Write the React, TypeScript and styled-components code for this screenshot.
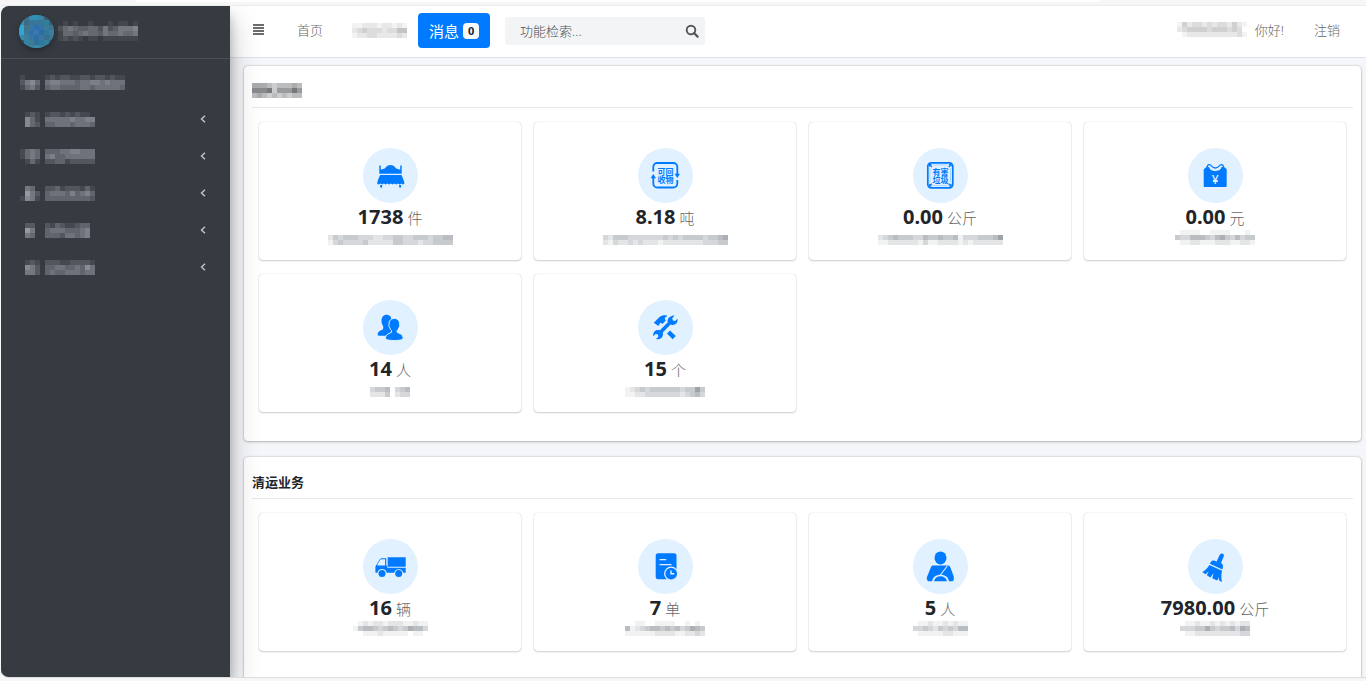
import React from 'react';
import styled, { createGlobalStyle } from 'styled-components';

const BLUE = '#007bff';
const PALE = '#e1f1ff';

const Global = createGlobalStyle`
  *, *::before, *::after { box-sizing: border-box; }
  html, body { margin: 0; padding: 0; }
  body {
    background: #f6f6f6;
    color: #212529;
    font-family: "Noto Sans", "Noto Sans CJK SC", sans-serif;
    font-size: 13px;
  }
  a { color: inherit; text-decoration: none; }
  button, input { font: inherit; }
`;

const Page = styled.div`
  height: 100vh;
  display: flex;
  flex-direction: column;
  padding: 0 0 3px 1px;
`;

const TopStrip = styled.div`
  flex: none;
  height: 6px;
  padding: 0 266px 0 134px;
  border-bottom: 1px solid #ececec;
`;

const TopPill = styled.div`
  height: 2px;
  background: #fff;
  border-radius: 0 0 8px 8px;
`;

const Frame = styled.div`
  flex: 1;
  min-height: 0;
  display: flex;
  overflow: hidden;
  border-radius: 8px 0 0 8px;
  background: #f4f6f9;
  border-bottom: 1px solid #dcdde0;
`;

const Sidebar = styled.aside`
  position: relative;
  z-index: 2;
  flex: none;
  width: 229px;
  background: #363b42;
  box-shadow: 0 14px 28px rgba(0, 0, 0, 0.25), 0 10px 10px rgba(0, 0, 0, 0.22);
`;

const Brand = styled.a`
  display: flex;
  align-items: center;
  gap: 4px;
  height: 53px;
  padding: 0 18px 2px;
  border-bottom: 1px solid #4b5058;
`;

const Logo = styled.span`
  display: flex;
  width: 35px;
  height: 33px;
  border-radius: 50%;
  overflow: hidden;
  background: #3a7f9f;
  box-shadow: 0 3px 6px rgba(0, 0, 0, 0.3);
`;

const Menu = styled.nav`
  display: flex;
  flex-direction: column;
  gap: 1px;
  padding: 5px 24px 0 19px;
`;

const MenuItem = styled.a`
  display: flex;
  align-items: center;
  gap: 5px;
  height: 36px;
`;

const Chevron = styled.svg`
  margin-left: auto;
  width: 6px;
  height: 8px;
`;

const Main = styled.div`
  flex: 1;
  min-width: 0;
  display: flex;
  flex-direction: column;
`;

const Header = styled.header`
  flex: none;
  display: flex;
  align-items: center;
  height: 52px;
  padding: 0 26px 2px 23px;
  background: #fff;
  border-bottom: 1px solid #dee2e6;
  color: #666;
  font-weight: 300;
`;

const IconButton = styled.button`
  display: flex;
  padding: 0;
  border: 0;
  background: none;
  cursor: pointer;
`;

const MenuToggle = styled(IconButton)`
  padding-bottom: 2px;
`;

const NavLinks = styled.nav`
  display: flex;
  align-items: center;
  gap: 29px;
  padding: 0 11px 0 33px;
`;

const HeaderLink = styled.a`
  padding-bottom: 2px;
`;

const MessageButton = styled.button`
  display: flex;
  align-items: center;
  gap: 4px;
  height: 35px;
  padding: 0 11px;
  border: 0;
  border-radius: 4px;
  background: ${BLUE};
  color: #fff;
  font-size: 15px;
  font-weight: 400;
  cursor: pointer;
`;

const Count = styled.span`
  width: 16px;
  height: 16px;
  border-radius: 4px;
  background: #f8f9fa;
  color: #212529;
  font-size: 11px;
  font-weight: 700;
  line-height: 16px;
  text-align: center;
`;

const Search = styled.form`
  display: flex;
  align-items: center;
  width: 200px;
  height: 28px;
  margin: 0 0 0 15px;
  padding: 0 6px 0 15px;
  border-radius: 3px;
  background: #f2f4f6;
`;

const SearchInput = styled.input`
  flex: 1;
  min-width: 0;
  padding: 0;
  border: 0;
  outline: 0;
  background: none;
  color: #4c4f52;
  font-weight: 300;
  &::placeholder { color: #4c4f52; opacity: 1; }
`;

const UserArea = styled.div`
  display: flex;
  align-items: center;
  gap: 30px;
  margin-left: auto;
`;

const Greeting = styled.span`
  display: flex;
  align-items: center;
  gap: 8px;
  padding-bottom: 2px;
`;

const Content = styled.main`
  flex: 1;
  min-height: 0;
  display: flex;
  flex-direction: column;
  gap: 16px;
  padding: 8px 5px 16px 14px;
  overflow-y: auto;
  scrollbar-width: none;
`;

const Panel = styled.section`
  flex: none;
  padding: 0 8px 29px;
  border-radius: 4px;
  background: #fff;
  box-shadow: 0 0 2px rgba(0, 0, 0, 0.25), 0 1px 3px rgba(0, 0, 0, 0.2);
`;

const PanelTitle = styled.h2`
  display: flex;
  align-items: center;
  height: 42px;
  margin: 0;
  padding-top: 8px;
  border-bottom: 1px solid #e6e7e9;
  font-size: 13px;
  font-weight: 700;
`;

const CardGrid = styled.div`
  display: grid;
  grid-template-columns: repeat(4, 1fr);
  gap: 14px 13px;
  padding: 14px 7px 0;
`;

const Card = styled.article`
  display: flex;
  flex-direction: column;
  align-items: center;
  height: 138px;
  padding-top: 26px;
  border-radius: 4px;
  background: #fff;
  box-shadow: 0 0 1px rgba(0, 0, 0, 0.25), 0 1px 2px rgba(0, 0, 0, 0.18);
`;

const Badge = styled.svg`
  flex: none;
  width: 55px;
  height: 55px;
  border-radius: 50%;
  background: ${PALE};
`;

const Figure = styled.p`
  display: flex;
  align-items: baseline;
  gap: 4px;
  height: 27px;
  margin: 0;
  color: #212529;
  font-size: 20px;
  font-weight: 700;
  line-height: 27px;
`;

const Unit = styled.span`
  color: #666;
  font-size: 15px;
  font-weight: 300;
`;

const Glyphs = styled.text`
  font-family: "Noto Sans CJK SC", sans-serif;
  font-weight: 700;
  font-size: 8px;
  fill: ${BLUE};
`;

const Yen = styled.text`
  font-family: "Noto Sans", sans-serif;
  font-weight: 500;
  font-size: 12px;
  fill: ${PALE};
`;

/* Masked text: rows of 5px cells, each digit is the strength of one cell. */
function Mosaic({ rows, color }: { rows: string[]; color: string }) {
  const width = rows[0].length * 5;
  const height = rows.length * 5;
  return (
    <svg width={width} height={height} viewBox={`0 0 ${width} ${height}`} shapeRendering="crispEdges" aria-hidden="true">
      {rows.flatMap((row, y) =>
        row.split('').map((cell, x) =>
          cell === '0' ? null : (
            <rect key={`${x}-${y}`} x={x * 5} y={y * 5} width="5" height="5" fill={color} opacity={Number(cell) / 10} />
          ),
        ),
      )}
    </svg>
  );
}

const LOGO_COLORS = [
  ['#3b5a6a', '#3c6f88', '#2f8fb4', '#318fb2', '#3586a6', '#3d6173', '#3b4a55'],
  ['#3a8aa8', '#3a6d85', '#3a7593', '#37759b', '#3c7590', '#2f7f9f', '#3b6072'],
  ['#2fa9d2', '#427387', '#3378a6', '#2f6fae', '#3475a5', '#3d7b98', '#3a7590'],
  ['#2fa5cf', '#3b7899', '#3471a8', '#3a78b4', '#2e6ba0', '#34779e', '#38809d'],
  ['#338cae', '#3f7f9b', '#3577a2', '#2f6da6', '#3a76a0', '#35718f', '#3b7890'],
  ['#3a5a6a', '#3583a3', '#3f7a93', '#2f6f9c', '#32789d', '#357f9e', '#3b5a6a'],
  ['#3b4b55', '#3c6f84', '#2f86a7', '#3f88a2', '#33819f', '#3c6376', '#3b444d'],
];

function LogoMark() {
  return (
    <svg width="35" height="35" viewBox="0 0 35 35" shapeRendering="crispEdges" aria-hidden="true">
      {LOGO_COLORS.flatMap((row, y) =>
        row.map((fill, x) => <rect key={`${x}-${y}`} x={x * 5} y={y * 5} width="5" height="5" fill={fill} />),
      )}
    </svg>
  );
}

const icons: Record<string, React.ReactNode> = {
  bed: (
    <g fill={BLUE}>
      <path d="M16.3 17.5h1.5v4.2l3.200-.9c2-.5 2.300-3.700 6.500-3.700s4.500 3.200 6.500 3.700l3.200.9v-4.200h1.500v8.300H16.300z" />
      <path d="M16.500 27h22c1 2.500 2.800 5.500 2.900 9l-1.700.4-1.500-.9-1.500.9-1.800-.9-1.700.9-1.800-.9-1.700.9-1.800-.9-1.700.9-1.800-.9-1.700.9-1.800-.9-1.700.9-1.800-.9-1.500.9-1.700-.4c.1-3.500 1.900-6.500 2.900-9z" />
      <path d="M17 37h2.300l-.4 2.800h-1.400zM36 37h2.300l-.5 2.800h-1.400z" />
    </g>
  ),
  recycle: (
    <g>
      <g fill="none" stroke={BLUE} strokeWidth="1.800">
        <path d="M15.300 23.500V19a4 4 0 0 1 4-4h16a4 4 0 0 1 4 4v8" />
        <path d="M39.300 32v3.500a4 4 0 0 1-4 4h-16a4 4 0 0 1-4-4V29" />
      </g>
      <path d="M36.600 25.700h5.400l-2.700 4.300zM12.600 30.200H18l-2.700-4.300z" fill={BLUE} />
      <Glyphs x="19.500 27.500 19.500 27.500" y="26.500 26.500 34.500 34.500">可回收物</Glyphs>
    </g>
  ),
  hazard: (
    <g>
      <rect x="14.800" y="14.800" width="25" height="25" rx="3.500" fill="none" stroke={BLUE} strokeWidth="1.700" />
      <path d="M20 17h14.600M20 37.600h14.600M17 20v14.600M37.600 20v14.600" stroke={BLUE} strokeWidth=".5" opacity=".5" />
      <path d="M16 19v-3h3zM38.600 19v-3h-3zM16 35.600v3h3zM38.600 35.600v3h-3z" fill={BLUE} />
      <path d="M16.500 16.500l2.400 2.400M38.100 16.500l-2.400 2.400M16.500 38.100l2.400-2.400M38.100 38.100l-2.400-2.400" stroke={BLUE} strokeWidth="1.400" />
      <Glyphs x="19.500 27.500 19.500 27.500" y="26.500 26.500 34.500 34.500">有害垃圾</Glyphs>
    </g>
  ),
  bag: (
    <g>
      <path d="M16.700 20.500l2-1.500 2.300 0c1 3.200 3.500 4 6.300 4s5.300-.8 6.300-4l2.300 0 2 1.500c.6.300.8.600.8 1.200v16.100c0 .8-.4 1.200-1.200 1.200H16.900c-.8 0-1.200-.4-1.200-1.200V21.700c0-.6.400-.9 1-1.200z" fill={BLUE} />
      <path d="M18.800 20c.3-2.200 1.200-3.400 2.600-3.300 2.300.2 2.200 3.300 5.900 3.300s3.600-3.100 5.900-3.300c1.400-.1 2.300 1.100 2.600 3.300" fill="none" stroke={BLUE} strokeWidth="1.300" />
      <Yen x="27.300" y="35.500" textAnchor="middle">¥</Yen>
    </g>
  ),
  users: (
    <g fill={BLUE}>
      <path d="M23.600 14.700c3.200 0 5 2.200 4.800 5.600-.1 2-.8 3.900-2 5.200-.4.900 0 2 .7 2.500l2.500 1.200-3 6.500H16c-1.300 0-1.500-1-1.200-2.300.6-2.400 3-2.700 4.500-3.600 1.200-.7 1.300-2.700.6-4-1-1.500-1.500-3.300-1.400-5.200.1-3.700 2-5.900 5.100-5.900z" />
      <path
        d="M31.300 18.400c3.500 0 5.500 2.400 5.300 5.800 0 .8.300 1.400 0 2.200-.2.600-.6.900-.8 1.500-.3 1.200-1 2.200-1.700 2.800v1.500c1.500 1.300 5.700 1.600 6 5.300.1 1.900-1.600 3-8.800 3s-8.900-1.100-8.800-3c.3-3.700 4.500-4 6-5.300v-1.500c-.8-.6-1.400-1.600-1.700-2.800-.2-.6-.6-.9-.8-1.500-.3-.8 0-1.400 0-2.200-.2-3.400 1.800-5.800 5.300-5.800z"
        stroke={PALE}
        strokeWidth="1"
      />
    </g>
  ),
  tools: (
    <g>
      <path d="M15.800 22.700l5.700-5.600c2.300-1.900 5-2.200 7.800-1.400l-2.700 2.500 1.200 2.200-3.400 3.500-1.700-1.200c-1 .3-1.200 1.400-1.400 2.500l-1.200.6z" fill={BLUE} />
      <path d="M30.500 32l5.700 5.600" stroke={BLUE} strokeWidth="4.400" />
      <path
        d="M33.900 16c1.100-.4 2-.5 2.600-.4l-2.200 2.600.5 2.300 2.300.5 2.400-2.300c.4 3.200-1.100 6-4.800 6.200-.8.100-1.500-.1-2.100-.4l-7.800 8c.9 3-1 6.700-5 6.800-.8 0-1.300 0-1.800-.2l2.400-2.300-.5-2.300-2.300-.5-2.300 2.200c-.5-3.600 1.500-6.300 4.900-6.200.7 0 1.200.1 1.700.3l7.900-8c-.8-2.600.8-5.400 4.100-6.300z"
        fill={BLUE}
      />
    </g>
  ),
  truck: (
    <g>
      <path d="M24.700 18.300h18v9.400h-18z" fill={BLUE} />
      <path d="M23.300 19.200v7.500h1v2h18.400v5.100h-2.500a4.600 4.600 0 0 0-9 0h-7.600a4.600 4.600 0 0 0-9.100 0h-1.200c-.6 0-.9-.3-.9-.9V28.300c0-.8.200-1.300.7-2l3.300-5.300c.7-1.200 1.400-1.800 2.800-1.800z" fill={BLUE} />
      <path d="M22.100 20.200v6.200H15c-.7 0-.9-.5-.5-1.100l2.500-4c.5-.8 1-1.100 2-1.100z" fill={PALE} />
      <circle cx="19" cy="34.600" r="3.500" fill={BLUE} />
      <circle cx="35.700" cy="34.600" r="3.500" fill={BLUE} />
    </g>
  ),
  order: (
    <g>
      <rect x="17.700" y="14.300" width="20.800" height="26" rx="2.500" fill={BLUE} />
      <path d="M22 20.700h5.700M22 25.700h11" stroke={PALE} strokeWidth="1.200" strokeLinecap="round" />
      <circle cx="33.200" cy="34.700" r="6.500" fill={BLUE} stroke={PALE} strokeWidth="1.300" />
      <path d="M33 31.600v3.200h3.300" fill="none" stroke={PALE} strokeWidth="1.400" />
    </g>
  ),
  driver: (
    <g>
      <ellipse cx="27.500" cy="18.900" rx="6" ry="6.500" fill={BLUE} />
      <path d="M20.500 26.500h14c1.300 0 2 .4 2.700 1.500l3.200 8.500c.7 2.300 1 5.800-1.600 5.800H16.200c-2.600 0-2.900-3.500-1.600-5.800L18 28c.6-1.100 1.300-1.500 2.500-1.500z" fill={BLUE} />
      <path d="M34.300 27L27 36.500" stroke={PALE} strokeWidth="1.100" />
      <path d="M19 43c.3-4.800 4-7.200 8.500-7.200s8.200 2.400 8.500 7.200z" fill={PALE} />
      <path d="M21 42.300c.8-3.400 3.400-5 6.500-5s5.700 1.600 6.500 5z" fill={BLUE} />
    </g>
  ),
  broom: (
    <g fill={BLUE}>
      <path d="M33.700 14.600c1.500-.1 2.600 1 2.100 2.600L33 24.100c1.700.9 2.400 2.500 1.800 4.600l-.4 1.700-12.600-5.600.9-1.600c.9-1.600 2.500-2 4.500-1.200l1.500.6 2.900-6.700c.4-.8 1.100-1.200 2.100-1.300z" />
      <path d="M21.300 26l12.800 5.700c-1 3.700-.9 7.600-.1 11.200l-2.900-1.500-.6-3.300-.8 3-1.200.1-4.200-2 1.200-4.900-3.100 4.300-3.600-2.300 1.900-3.900-3.300 2.900-3.100-2.200c3-1.700 5.200-4.100 7-7.100z" />
    </g>
  ),
};

interface Stat {
  icon: string;
  value: string;
  unit: string;
  label: string[];
}

const disposal: Stat[] = [
  { icon: 'bed', value: '1738', unit: '件', label: ['2434443332233443344434455', '1343333422222443332334444'] },
  { icon: 'recycle', value: '8.18', unit: '吨', label: ['3244433333334343444434456', '2132232322212222222233344'] },
  { icon: 'hazard', value: '0.00', unit: '公斤', label: ['2345444335445445133344457', '1122222213112222121222222'] },
  { icon: 'bag', value: '0.00', unit: '元', label: ['0111100111100010', '4335554356435344', '0112211122211221'] },
  { icon: 'users', value: '14', unit: '人', label: ['34450345', '22240233'] },
  { icon: 'tools', value: '15', unit: '个', label: ['1234344444434474', '1122333333323453'] },
];

const clearing: Stat[] = [
  { icon: 'truck', value: '16', unit: '辆', label: ['012122122211211', '145543454346553', '001112111110110'] },
  { icon: 'order', value: '7', unit: '单', label: ['0011001111001010', '5123455454534654', '1111112222112232'] },
  { icon: 'driver', value: '5', unit: '人', label: ['01121121211', '33432434355', '01111122111'] },
  { icon: 'broom', value: '7980.00', unit: '公斤', label: ['01121121212122', '33344643445365', '01122222222233'] },
];

const menu = [
  { icon: ['1000', '2453', '1342'], text: ['1212211221221211', '4554443445545444', '3443333443444443'], open: false },
  { icon: ['0121', '0531', '0532'], text: ['1221212110', '4444454455', '3344434443'], open: true },
  { icon: ['1343', '1343', '0131'], text: ['3334455444', '4533444444', '2233122222'], open: true },
  { icon: ['0430', '0642', '1541'], text: ['2231222131', '3444353453', '3333333332'], open: true },
  { icon: ['0220', '0640', '0430'], text: ['2132112330', '3444333450', '3332443450'], open: true },
  { icon: ['0121', '0542', '0442'], text: ['2221122221', '3344334364', '3433444344'], open: true },
];

function StatCard({ icon, value, unit, label }: Stat) {
  return (
    <Card>
      <Badge viewBox="0 0 55 55" aria-hidden="true">{icons[icon]}</Badge>
      <Figure>
        {value}
        <Unit>{unit}</Unit>
      </Figure>
      <Mosaic rows={label.length === 2 ? ['0'.repeat(label[0].length), ...label] : label} color="#747c84" />
    </Card>
  );
}

export default function App() {
  return (
    <>
      <Global />
      <Page>
        <TopStrip>
          <TopPill />
        </TopStrip>
        <Frame>
          <Sidebar>
            <Brand href="#">
              <Logo>
                <LogoMark />
              </Logo>
              <Mosaic rows={['01010010001011010', '24543344252355560', '14434544354454450', '12121011011111110']} color="#b0b2b6" />
            </Brand>
            <Menu>
              {menu.map((item, i) => (
                <MenuItem href="#" key={i}>
                  <Mosaic rows={item.icon} color="#d3d8e2" />
                  <Mosaic rows={item.text} color="#c2c6cf" />
                  {item.open && (
                    <Chevron viewBox="0 0 6 8" aria-hidden="true">
                      <path d="M5 .7L1.500 4 5 7.300" fill="none" stroke="#c2c7d0" strokeWidth="1.400" />
                    </Chevron>
                  )}
                </MenuItem>
              ))}
            </Menu>
          </Sidebar>
          <Main>
            <Header>
              <MenuToggle type="button">
                <svg width="11" height="12" viewBox="0 0 11 12" aria-hidden="true">
                  <path d="M0 0h11v2H0zM0 3h11v2H0zM0 6h11v2H0zM0 9h11v2H0z" fill="#6c6c6c" />
                </svg>
              </MenuToggle>
              <NavLinks>
                <HeaderLink href="#">首页</HeaderLink>
                <Mosaic rows={['11222122121', '23433323355', '12233222232']} color="#8a8a8a" />
              </NavLinks>
              <MessageButton type="button">
                消息 <Count>0</Count>
              </MessageButton>
              <Search onSubmit={(e) => e.preventDefault()}>
                <SearchInput type="text" placeholder="功能检索..." aria-label="功能检索..." />
                <IconButton type="submit">
                  <svg width="14" height="14" viewBox="0 0 14 14" aria-hidden="true">
                    <circle cx="6" cy="6" r="4.300" fill="none" stroke="#55585b" strokeWidth="1.900" />
                    <path d="M9 9l3.600 3.600" stroke="#55585b" strokeWidth="2.200" strokeLinecap="round" />
                  </svg>
                </IconButton>
              </Search>
              <UserArea>
                <Greeting>
                  <Mosaic rows={['14233232332421', '23444434443430', '01222222222231']} color="#8a8a8a" />
                  你好!
                </Greeting>
                <HeaderLink href="#">注销</HeaderLink>
              </UserArea>
            </Header>
            <Content>
              <Panel>
                <PanelTitle>
                  <Mosaic rows={['5554344454', '7778366686', '4543434344']} color="#55585c" />
                </PanelTitle>
                <CardGrid>
                  {disposal.map((stat) => (
                    <StatCard key={stat.icon} {...stat} />
                  ))}
                </CardGrid>
              </Panel>
              <Panel>
                <PanelTitle>清运业务</PanelTitle>
                <CardGrid>
                  {clearing.map((stat) => (
                    <StatCard key={stat.icon} {...stat} />
                  ))}
                </CardGrid>
              </Panel>
            </Content>
          </Main>
        </Frame>
      </Page>
    </>
  );
}
